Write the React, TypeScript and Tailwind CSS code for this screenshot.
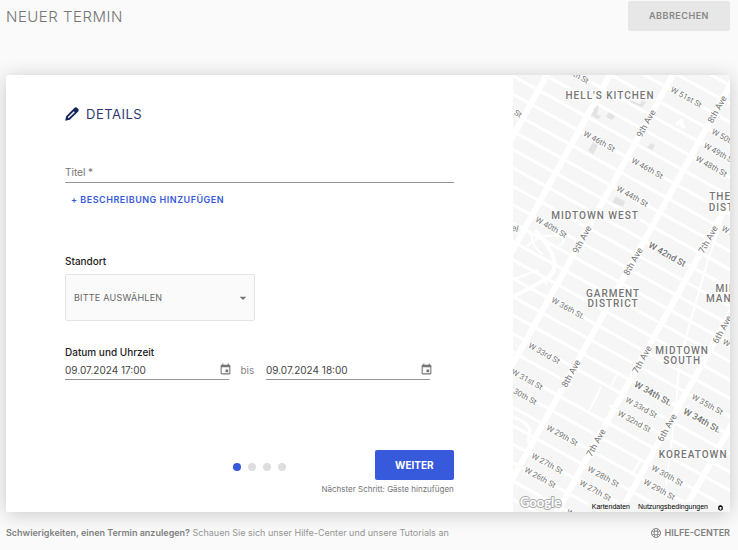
import { useState } from 'react'
import { MdArrowDropDown, MdEvent } from 'react-icons/md'

// Midtown street grid: avenues run at 61 degrees, streets at 29 degrees
const SLOPE = 0.553
const avenues = [-92, -29, 34, 97, 160, 223, 286, 349, 412]
const streets = Array.from({ length: 40 }, (_, i) => 20 + (i - 15) * 18.4)

interface MapLabel {
    text: string;
    x: number;
    y: number;
    big?: boolean;
}

const streetLabels: MapLabel[] = [
    { text: 'W 48th St', x: 60, y: -1 },
    { text: 'W 47th St', x: -7, y: 33 },
    { text: 'W 51st St', x: 173, y: 23 },
    { text: 'W 50th St', x: 214, y: 65 },
    { text: 'W 49th St', x: 206, y: 79 },
    { text: 'W 48th St', x: 198, y: 92 },
    { text: 'W 46th St', x: 86, y: 67 },
    { text: 'W 46th St', x: 134, y: 94 },
    { text: 'W 44th St', x: 119, y: 122 },
    { text: 'W 40th St', x: 38, y: 153 },
    { text: 'W 42nd St', x: 154, y: 180, big: true },
    { text: 'W 39th St', x: 224, y: 162 },
    { text: 'W 38th St', x: 225, y: 275 },
    { text: 'W 36th St.', x: 55, y: 234 },
    { text: 'W 33rd St', x: 31, y: 279 },
    { text: 'W 31st St', x: 14, y: 305 },
    { text: 'W 30th St', x: 8, y: 320 },
    { text: 'W 34th St.', x: 140, y: 319, big: true },
    { text: 'W 33rd St', x: 128, y: 333 },
    { text: 'W 32nd St', x: 121, y: 347 },
    { text: 'W 35th St', x: 194, y: 330 },
    { text: 'W 34th St.', x: 189, y: 346, big: true },
    { text: 'W 29th St', x: 49, y: 361 },
    { text: 'W 27th St', x: 34, y: 389 },
    { text: 'W 26th St', x: 27, y: 403 },
    { text: 'W 28th St', x: 90, y: 402 },
    { text: 'W 27th St', x: 82, y: 416 },
    { text: 'W 30th St', x: 154, y: 401 },
    { text: 'W 29th St', x: 146, y: 415 },
    { text: 'W 25th St', x: 69, y: 445 },
]

const avenueLabels: MapLabel[] = [
    { text: '9th Ave', x: 133, y: 49 },
    { text: '8th Ave', x: 204, y: 35 },
    { text: '9th Ave', x: 69, y: 165 },
    { text: '8th Ave', x: 120, y: 187 },
    { text: '7th Ave', x: 195, y: 165 },
    { text: '6th Ave', x: 209, y: 255 },
    { text: '7th Ave', x: 129, y: 285 },
    { text: '8th Ave', x: 58, y: 299 },
    { text: '7th Ave', x: 83, y: 368 },
    { text: '6th Ave', x: 154, y: 353 },
]

const areaLabels: MapLabel[] = [
    { text: "HELL'S KITCHEN", x: 97, y: 21 },
    { text: 'MIDTOWN WEST', x: 82, y: 141 },
    { text: 'THEATER', x: 221, y: 122 },
    { text: 'DISTRICT', x: 221, y: 133 },
    { text: 'GARMENT', x: 100, y: 219 },
    { text: 'DISTRICT', x: 100, y: 229 },
    { text: 'MIDTOWN', x: 229, y: 214 },
    { text: 'MANHATTAN', x: 228, y: 224 },
    { text: 'MIDTOWN', x: 169, y: 276 },
    { text: 'SOUTH', x: 169, y: 286 },
    { text: 'KOREATOWN', x: 180, y: 380 },
]

function CityMap() {
    return (
        <svg className="absolute inset-0 h-full w-full" viewBox="0 0 217 438" preserveAspectRatio="xMidYMid slice" role="img" aria-label="Karte">
            <rect width="217" height="438" fill="#f6f6f6" />
            <g stroke="#ffffff" strokeWidth="3">
                {streets.map((y) => (
                    <line key={y} x1="-5" y1={y - 5 * SLOPE} x2="225" y2={y + 225 * SLOPE} />
                ))}
            </g>
            <path d="M59 310 96 331" stroke="#f6f6f6" strokeWidth="5" />
            <g stroke="#ffffff" strokeWidth="6">
                {avenues.map((x) => (
                    <line key={x} x1={x + 5 * SLOPE} y1="-5" x2={x - 445 * SLOPE} y2="445" />
                ))}
            </g>
            <g fill="none" stroke="#ffffff" strokeWidth="3">
                <path d="M215 128 195 185 175 255 166 290 163 330 153 410" strokeWidth="2" />
                <path d="M88 312 75 339M104 300 98 311M128 385l-10 16" strokeWidth="2" />
                <path d="M22 156Q38 172 41 186T30 206L18 213 0 222" strokeWidth="4" />
                <path d="M14 172q12-14 34-10 6 6-3 9M18 160q2 14 12 20M0 205 24 196 34 210" strokeWidth="2" />
                <path d="M-2 342Q14 346 17 356L15 368" strokeWidth="3" />
                <path d="M163 50 170 46M166 46l5 8" strokeWidth="4" />
            </g>
            <g fill="#e3e3e3">
                <path d="M82 33 86 31 84 40 88 42 85 45 78 41z" />
                <path d="M96 38 102 42 99 46 93 42z" />
                <path d="M80 68 85 71 80 80 75 76z" />
                <path d="M138 69 142 71 139 76 134 73z" />
                <path d="M103 122 112 127 110 132 99 128z" />
                <path d="M129 26 133 28 129 33 117 28 118 26 127 30z" />
            </g>
            <g fill="#757575" stroke="#ffffff" strokeWidth="2" strokeLinejoin="round" textAnchor="middle" dominantBaseline="central" className="font-[Roboto,sans-serif] [paint-order:stroke]">
                {streetLabels.map((l) => (
                    <text key={l.text + l.x} transform={`translate(${l.x} ${l.y}) rotate(29)`} fontSize={l.big ? 9 : 8} fontWeight={l.big ? 500 : 400}>
                        {l.text}
                    </text>
                ))}
                {avenueLabels.map((l) => (
                    <text key={l.text + l.x} transform={`translate(${l.x} ${l.y}) rotate(-61)`} fontSize="9">
                        {l.text}
                    </text>
                ))}
                <text x="2" y="154" fontSize="9" transform="rotate(14 2 154)">el</text>
                {areaLabels.map((l) => (
                    <text key={l.text + l.x} x={l.x} y={l.y} fontSize="10" className="font-medium tracking-[1px]">
                        {l.text}
                    </text>
                ))}
            </g>
            <text x="7" y="432" fontSize="13" fill="#ffffff" stroke="#adadad" strokeWidth="2" strokeLinejoin="round" className="font-[Lato,sans-serif] font-bold [paint-order:stroke]">
                Google
            </text>
        </svg>
    )
}

function PencilIcon() {
    return (
        <svg className="size-[14px] shrink-0" viewBox="0 0 14 14" fill="#12225c" aria-hidden="true">
            <path
                fillRule="evenodd"
                d="M9.600 .8Q10.800 -.2 12 .8L13.200 2Q14.200 3.200 13.200 4.400L4.800 12.800 .2 13.800 1.200 9.200zM8.800 4.200 3.200 9.800 2.800 11.200 4.200 10.800 9.800 5.200z"
            />
        </svg>
    )
}

function LifeRingIcon() {
    return (
        <svg className="size-[10px]" viewBox="0 0 20 20" fill="none" stroke="currentColor" strokeWidth="2" aria-hidden="true">
            <circle cx="10" cy="10" r="9" />
            <circle cx="10" cy="10" r="4" />
            <path strokeWidth="1.500" d="M7 2v5M13 2v5M7 13v5M13 13v5M2 7h5M2 13h5M13 7h5M13 13h5" />
        </svg>
    )
}

interface DateFieldProps {
    label: string;
    value: string;
    onChange: (value: string) => void;
}

function DateField({ label, value, onChange }: DateFieldProps) {
    return (
        <div className="flex h-5 flex-1 items-center border-b border-[#949494]">
            <input
                aria-label={label}
                className="w-full min-w-0 flex-1 bg-transparent text-[10px] leading-4 text-[#444] outline-none"
                value={value}
                onChange={(e) => onChange(e.target.value)}
            />
            <button type="button" aria-label="Kalender öffnen" className="-mr-[3px] text-[#757575]">
                <MdEvent className="size-[13px]" />
            </button>
        </div>
    )
}

export default function App() {
    const [title, setTitle] = useState('')
    const [start, setStart] = useState('09.07.2024 17:00')
    const [end, setEnd] = useState('09.07.2024 18:00')

    return (
        <div className="min-h-screen bg-[#fafafa] pr-2 pl-[6px] font-[Inter,sans-serif]">
            <header className="flex items-start justify-between pt-px">
                <h1 className="pt-1 text-[15px] leading-6 font-light tracking-[0.5px] text-[#757575]">NEUER TERMIN</h1>
                <button type="button" className="h-[30px] w-[102px] rounded-xs bg-[#e7e7e7] text-[9px] font-semibold tracking-[0.5px] text-[#868686]">
                    ABBRECHEN
                </button>
            </header>

            <main className="mt-11 flex overflow-hidden rounded-xs bg-white shadow-[0_2px_20px_rgba(0,0,0,0.2)]">
                <form className="flex-1 px-[59px] pt-[27px] pb-[17px]">
                    <h2 className="flex items-center gap-[7px] text-[13px] leading-6 tracking-[0.5px] text-[#2c3a70]">
                        <PencilIcon />
                        DETAILS
                    </h2>

                    <input
                        aria-label="Titel"
                        placeholder="Titel *"
                        className="mt-8 block h-[25px] w-full border-b border-[#949494] bg-transparent pt-1 text-[10px] text-[#444] outline-none placeholder:text-[#757575]"
                        value={title}
                        onChange={(e) => setTitle(e.target.value)}
                    />
                    <button type="button" className="mt-[9px] ml-[6px] block text-[9px] leading-4 font-semibold tracking-[0.5px] text-[#3759db]">
                        + BESCHREIBUNG HINZUFÜGEN
                    </button>

                    <label htmlFor="location" className="mt-[45px] block text-[10px] leading-4 font-medium text-[#222]">
                        Standort
                    </label>
                    <div className="relative mt-[5px] w-[190px]">
                        <select id="location" className="h-[47px] w-full appearance-none rounded-xs border border-[#e4e4e4] bg-[#fafafa] px-2 text-[9px] tracking-wide text-[#666] outline-none">
                            <option>BITTE AUSWÄHLEN</option>
                        </select>
                        <MdArrowDropDown className="pointer-events-none absolute top-4 right-1 size-4 text-[#757575]" />
                    </div>

                    <fieldset className="mt-[23px]">
                        <legend className="text-[10px] leading-4 font-medium text-[#222]">Datum und Uhrzeit</legend>
                        <div className="mr-6 flex items-center">
                            <DateField label="Beginn" value={start} onChange={setStart} />
                            <span className="w-[37px] text-center text-[10px] text-[#868686]">bis</span>
                            <DateField label="Ende" value={end} onChange={setEnd} />
                        </div>
                    </fieldset>

                    <div className="mt-[70px] grid grid-cols-3 items-center">
                        <div className="col-start-2 flex justify-center gap-[7px] pt-1">
                            <span className="size-2 rounded-full bg-[#3759db]" />
                            <span className="size-2 rounded-full bg-[#dedede]" />
                            <span className="size-2 rounded-full bg-[#dedede]" />
                            <span className="size-2 rounded-full bg-[#dedede]" />
                        </div>
                        <button type="button" className="h-[30px] w-[79px] justify-self-end rounded-xs bg-[#3759db] text-[10px] font-bold text-white">
                            WEITER
                        </button>
                    </div>
                    <p className="mt-[3px] text-right text-[8px] leading-3 text-[#757575]">Nächster Schritt: Gäste hinzufügen</p>
                </form>

                <aside className="relative w-[30%] overflow-hidden">
                    <CityMap />
                    <div className="absolute right-0 bottom-0 flex h-[10px] items-center gap-2 bg-[#f5f5f5]/80 pr-[6px] pl-1 font-['Liberation_Sans',sans-serif] text-[7px] text-black">
                        <a href="#kartendaten">Kartendaten</a>
                        <a href="#nutzungsbedingungen">Nutzungsbedingungen</a>
                        <button type="button" aria-label="Fehler melden" className="ml-px">
                            <svg className="size-[7px]" viewBox="0 0 14 14" fill="none" stroke="currentColor" strokeWidth="2">
                                <path d="M4 5h6v6q-3 3-6 0zM5 4q2-4 4 0M2 6h2M2 10h2M10 6h2M10 10h2" />
                            </svg>
                        </button>
                    </div>
                </aside>
            </main>

            <footer className="flex items-center justify-between pt-[13px] text-[9px] leading-4 text-[#949494]">
                <p>
                    <strong className="font-semibold text-[#808080]">Schwierigkeiten, einen Termin anzulegen?</strong> Schauen Sie sich unser Hilfe-Center und unsere Tutorials an
                </p>
                <a href="#hilfe" className="flex items-center gap-1 font-semibold text-[#808080]">
                    <LifeRingIcon />
                    HILFE-CENTER
                </a>
            </footer>
        </div>
    )
}
